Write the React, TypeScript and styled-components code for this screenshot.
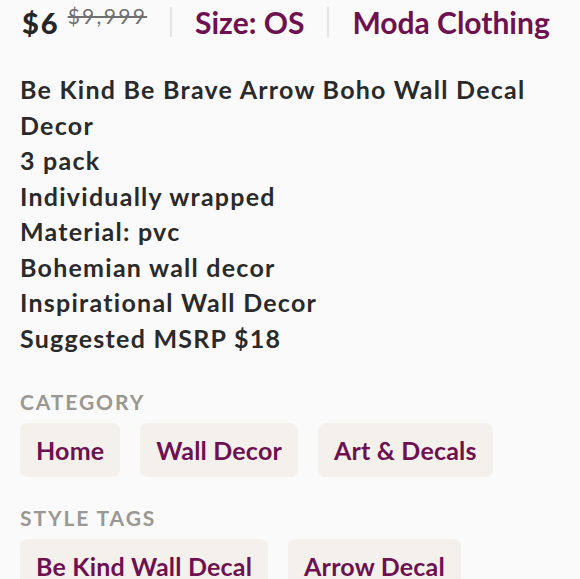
import styled, { createGlobalStyle } from 'styled-components';

const Global = createGlobalStyle`
  html, body {
    margin: 0;
    padding: 0;
    background: #fafafa;
  }
  body {
    font-family: Lato, "Open Sans", sans-serif;
    color: #2a2a2a;
  }
`;

const S = {
  page: styled.div`
    padding: 0 20px;
    width: 580px;
    height: 579px;
    box-sizing: border-box;
    overflow: hidden;
  `,
  priceRow: styled.div`
    display: flex;
    align-items: center;
    height: 44px;
  `,
  price: styled.span`
    margin-left: 2px;
    font-size: 29px;
    font-weight: 900;
    letter-spacing: 2px;
    color: #262626;
  `,
  original: styled.span`
    align-self: flex-start;
    margin: 3px 0 0 8px;
    font-size: 21px;
    letter-spacing: 2.3px;
    color: #707070;
    text-decoration: line-through;
  `,
  divider: styled.span`
    width: 2px;
    height: 30px;
    background: #e6e4e1;
    margin: 0 23px;
  `,
  link: styled.a`
    font-size: 30px;
    font-weight: 700;
    color: #6d1150;
    text-decoration: none;
  `,
  description: styled.div`
    margin-top: 28px;
    padding-bottom: 5px;
    font-size: 25px;
    font-weight: 700;
    letter-spacing: 1.25px;
    line-height: 35.5px;
    color: #2a2a2a;
  `,
  section: styled.div`
    margin-top: 27px;
  `,
  label: styled.div`
    font-size: 21px;
    font-weight: 700;
    letter-spacing: 1.9px;
    color: #9b9792;
    text-transform: uppercase;
    line-height: 28px;
  `,
  tags: styled.div`
    display: flex;
    flex-wrap: wrap;
    gap: 20px;
    margin-top: 7px;
  `,
  tag: styled.span`
    display: flex;
    align-items: center;
    height: 54px;
    padding: 0 16px;
    border-radius: 8px;
    background: #f4f1ed;
    color: #6d1150;
    font-size: 25px;
    font-weight: 700;
    letter-spacing: 0.2px;
  `,
};

const description = [
  'Be Kind Be Brave Arrow Boho Wall Decal Decor',
  '3 pack',
  'Individually wrapped',
  'Material: pvc',
  'Bohemian wall decor',
  'Inspirational Wall Decor',
  'Suggested MSRP $18',
];

const sections = [
  { title: 'Category', tags: ['Home', 'Wall Decor', 'Art & Decals'] },
  { title: 'Style Tags', tags: ['Be Kind Wall Decal', 'Arrow Decal'] },
];

export default function App() {
  return (
    <>
      <Global />
      <S.page>
        <S.priceRow>
          <S.price>$6</S.price>
          <S.original>$9,999</S.original>
          <S.divider />
          <S.link>Size: OS</S.link>
          <S.divider />
          <S.link>Moda Clothing</S.link>
        </S.priceRow>
        <S.description>
          {description.map(line => (
            <div key={line}>{line}</div>
          ))}
        </S.description>
        {sections.map(section => (
          <S.section key={section.title}>
            <S.label>{section.title}</S.label>
            <S.tags>
              {section.tags.map(tag => (
                <S.tag key={tag}>{tag}</S.tag>
              ))}
            </S.tags>
          </S.section>
        ))}
      </S.page>
    </>
  );
}
